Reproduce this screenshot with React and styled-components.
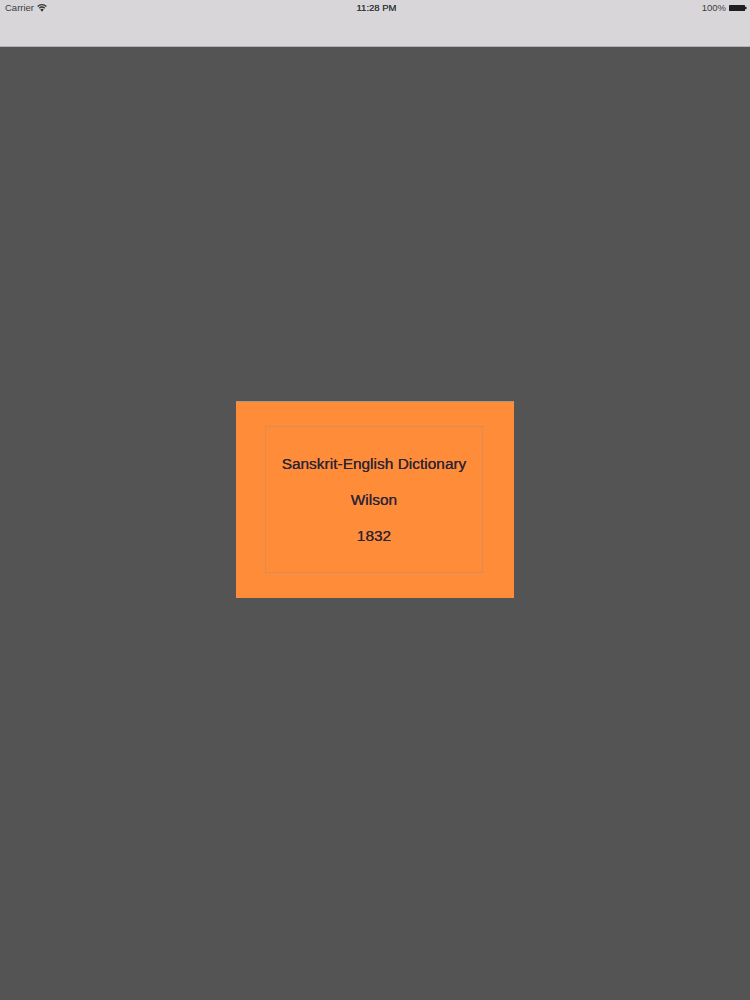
import React from "react";
import styled, { createGlobalStyle } from "styled-components";

const Global = createGlobalStyle`
  html, body { margin: 0; padding: 0; background: #555455; }
  * { box-sizing: border-box; }
`;
const Page = styled.div`
  width: 750px; height: 1000px; display: flex; flex-direction: column;
  background: #555455; font-family: "Liberation Sans", Arial, sans-serif; overflow: hidden;
`;
const TopBar = styled.header`
  height: 47px; flex: none; background: #d8d6d9; border-bottom: 1px solid #b5b4b5;
`;
const StatusBar = styled.div`
  height: 15px; display: grid; grid-template-columns: 1fr auto 1fr; align-items: center;
  padding: 0 3px 0 5px; font-size: 9.5px; color: #3c3b3d;
`;
const Left = styled.div`display: flex; align-items: center; gap: 3px;`;
const Right = styled.div`display: flex; align-items: center; justify-content: flex-end; gap: 3px;`;
const Clock = styled.div`font-size: 9.5px; color: #3a393b; text-shadow: 0 0 .5px #3a393b; padding-left: 1px;`;
const Stage = styled.main`
  flex: 1; display: flex; justify-content: center; padding-top: 354px;
`;
const Card = styled.section`
  width: 278px; height: 197px; background: #fe8c39; border-top: 1px solid #a8988c;
  padding: 24px 31px 24px 29px; flex: none;
`;
const Inner = styled.div`
  height: 147px; border: 1px dotted #b58d73; display: flex; flex-direction: column;
  align-items: center; padding-top: 29px; gap: 20px;
`;
const Line = styled.div`
  font-size: 15.4px; line-height: 16px; letter-spacing: 0.03px; color: #2e2535;
  text-shadow: 0 0 .6px #2e2535; white-space: nowrap;
`;

export default function App() {
  return (
    <Page>
      <Global />
      <TopBar>
        <StatusBar>
          <Left>
            Carrier
            <svg width="10" height="8" viewBox="0 0 10 8" aria-hidden="true">
              <path d="M5 7.8 3.2 5.6a2.6 2.6 0 0 1 3.6 0Z" fill="#333234" />
              <path d="M2.2 4.2a4.2 4.2 0 0 1 5.6 0M.6 2.4a6.6 6.6 0 0 1 8.8 0" fill="none" stroke="#333234" strokeWidth="1.3" />
            </svg>
          </Left>
          <Clock>11:28 PM</Clock>
          <Right>
            100%
            <svg width="18" height="6" viewBox="0 0 18 6" aria-hidden="true">
              <rect x="0" y="0" width="16" height="6" rx="0.5" fill="#1f1e20" />
              <rect x="16" y="1.75" width="1.5" height="2.5" fill="#1f1e20" />
            </svg>
          </Right>
        </StatusBar>
      </TopBar>
      <Stage>
        <Card>
          <Inner>
            <Line>Sanskrit-English Dictionary</Line>
            <Line>Wilson</Line>
            <Line>1832</Line>
          </Inner>
        </Card>
      </Stage>
    </Page>
  );
}
